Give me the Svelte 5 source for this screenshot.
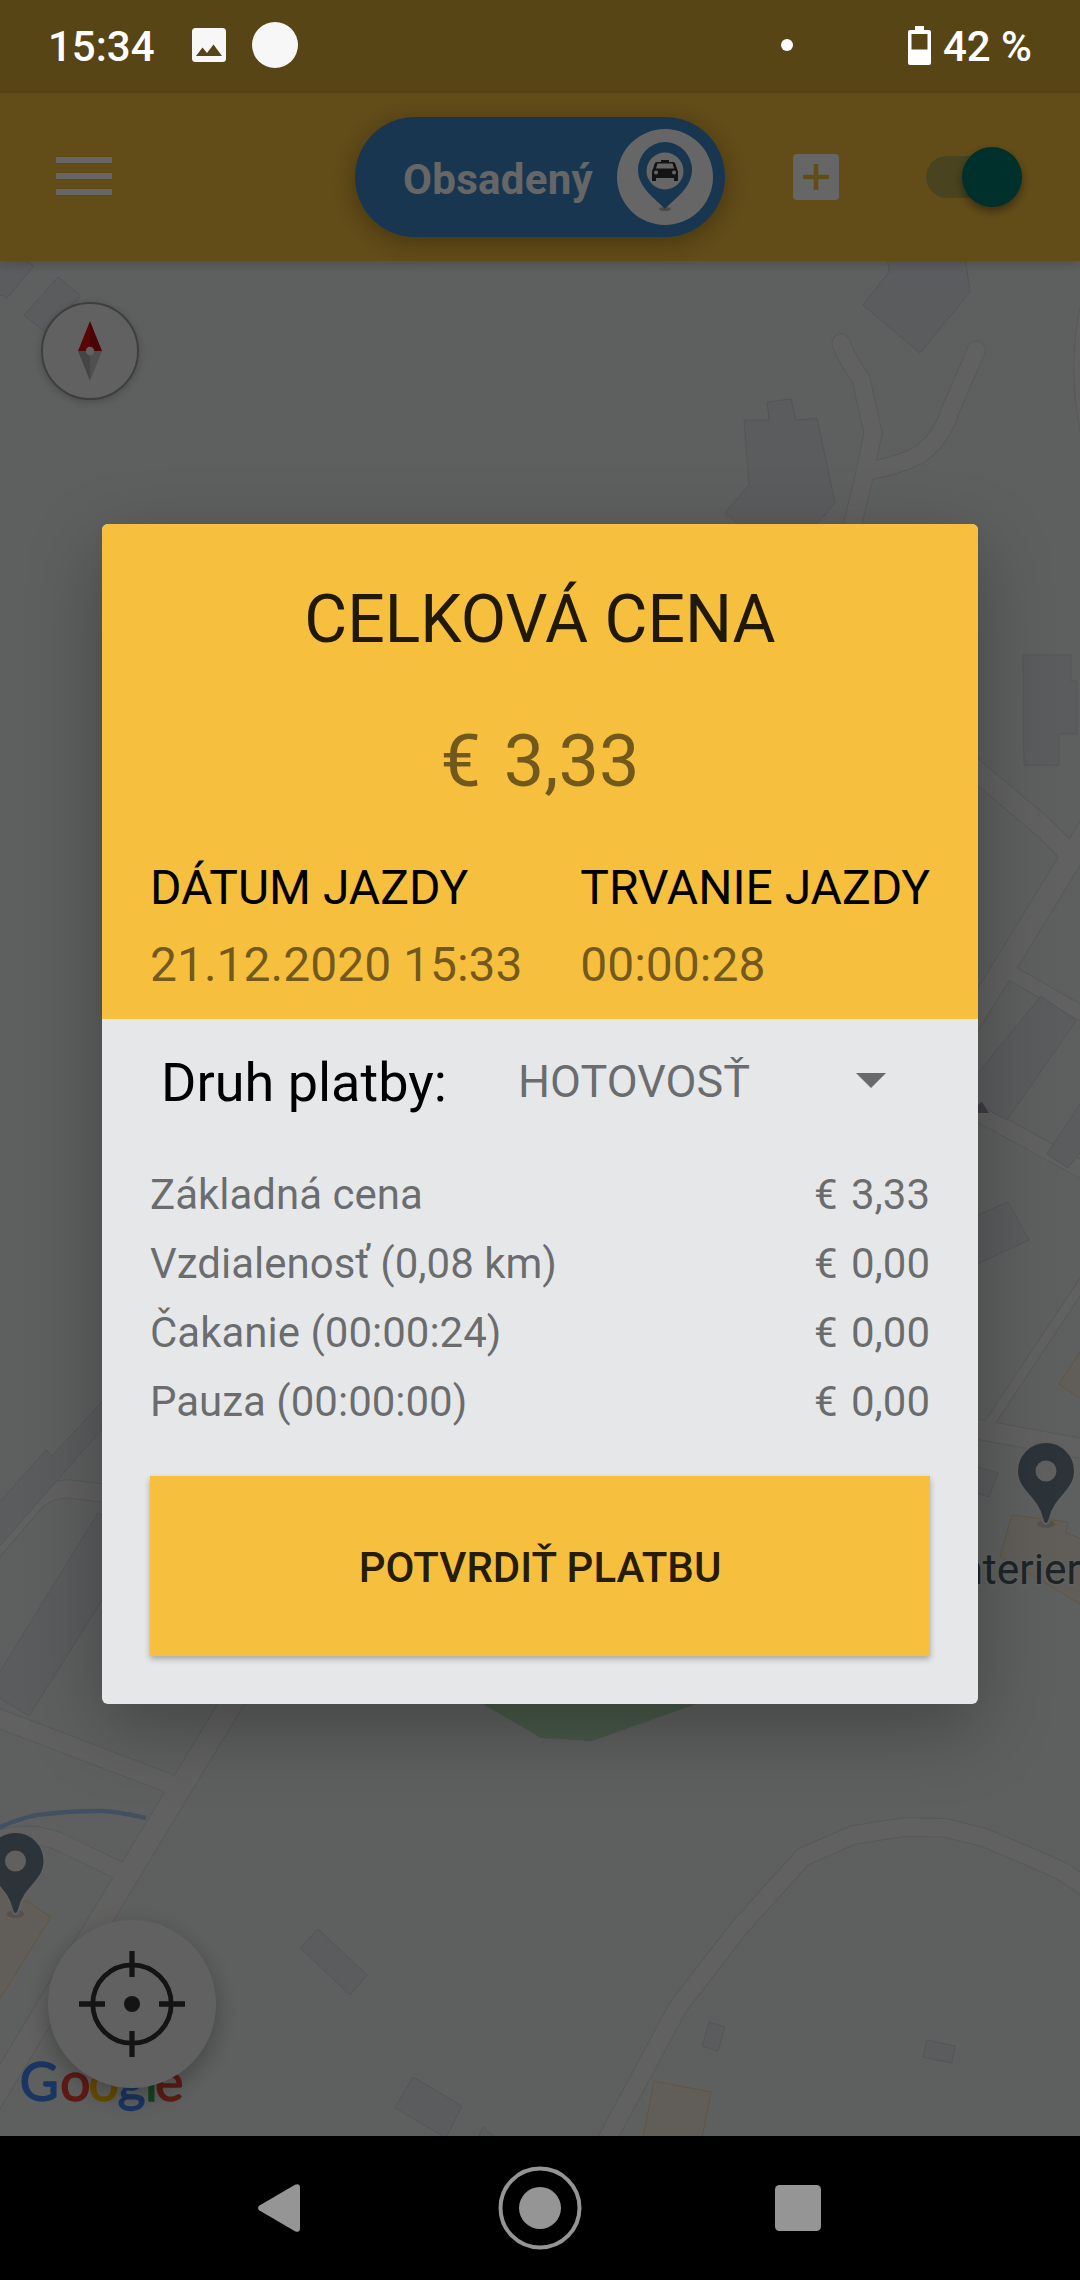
<script lang="ts">
  interface PriceRow {
    label: string;
    amount: string;
  }

  const rows: PriceRow[] = [
    { label: "Základná cena", amount: "€ 3,33" },
    { label: "Vzdialenosť (0,08 km)", amount: "€ 0,00" },
    { label: "Čakanie (00:00:24)", amount: "€ 0,00" },
    { label: "Pauza (00:00:00)", amount: "€ 0,00" },
  ];

  // Map geometry, in screen pixels. Width is the road's inner width.
  const roads = [
    { w: 17, d: "M841 343Q844 354 861 379L873 433L864 477L850 535" },
    { w: 17, d: "M976.500 350L950 411Q941 441 917 456Q897 466 868 471" },
    { w: 17, d: "M1091 300Q1075 365 1091 440" },
    { w: 20, d: "M960 757L1043 827L1066 850" },
    { w: 22, d: "M960 1038L1018 945L1090 827" },
    { w: 14, d: "M1006 970L1090 1018" },
    { w: 16, d: "M960 1103L1090 1174" },
    { w: 9, d: "M985 1430L1090 1272" },
    { w: 19, d: "M960 1426L1090 1450" },
    { w: 17, d: "M-8 1552L30 1508Q45 1488 70 1489L110 1494" },
    { w: 18, d: "M-10 1715L168 1783" },
    { w: 17, d: "M-12 1842Q30 1828 62 1843L118 1870" },
    { w: 22, d: "M243 1684L-10 2103" },
    {
      w: 17.5,
      d: "M604 2145L678 2007L739 1928L803 1857L853 1835L905 1827L946 1828L984 1837.500L1025.500 1855L1062 1871L1090 1890",
    },
  ];

  const buildings = [
    "887,255 889,272 863,305 920,353 970,292 965,255",
    "744,420 769,420 767,402 791,399 796,420 817,418 835,503 817,524 739,524 725,513 749,485",
    "-2,255 27,261 34,266 6,299 3,295 -2,296",
    "58,277 81,296 45,332 24,315",
    "1023,655 1071,655 1071,681 1077,681 1077,734 1059,734 1059,765 1024,765",
    "960,1095 1041,996 1076,1021 1007,1120 960,1095",
    "1047,1154 1082,1101 1082,1150 1068,1168",
    "960,1223 1008,1202 1029,1240 960,1272",
    "960,1462 998,1473 989,1497 960,1488",
    "-2,1504 46,1450 52,1456 110,1393 110,1420 -2,1548",
    "-2,1675 98,1513 104,1516 104,1597 29,1716 -2,1697",
    "318,1929 367,1975 350,1995 300,1948",
    "413,2077 462,2106 446,2138 395,2108",
    "483,2127 496,2138 478,2138",
    "709,2022 725,2027 718,2051 702,2046",
    "927,2040 955,2046 952,2063 923,2057",
  ];

  const shops = [
    "1059,1384 1082,1349 1082,1400",
    "1000,1556 1012,1515 1068,1522 1066,1533 1082,1539 1082,1605",
    "-2,1890 28,1902 51,1917 -2,2002",
    "654,2081 711,2092 702,2138 643,2138",
  ];

  const pins = [
    { x: 1046, y: 1471 },
    { x: 15.5, y: 1861 },
  ];

  const brand = [
    { ch: "G", x: 19.5, color: "#4285f4" },
    { ch: "o", x: 60, color: "#ea4335" },
    { ch: "o", x: 88.5, color: "#fbbc05" },
    { ch: "g", x: 117.5, color: "#4285f4" },
    { ch: "l", x: 145, color: "#34a853" },
    { ch: "e", x: 155, color: "#ea4335" },
  ];
</script>

<div class="screen">
  <header class="status">
    <span class="time">15:34</span>
    <svg class="picture" width="34" height="34" viewBox="0 0 34 34" aria-hidden="true">
      <path
        fill="#f7f7f7"
        fill-rule="evenodd"
        d="M3.500 0h27Q34 0 34 3.500v27Q34 34 30.500 34h-27Q0 34 0 30.500v-27Q0 0 3.500 0zM4 28h26l-8.500-11.500-6.500 8.500-4.500-5.500z"
      />
    </svg>
    <span class="disc"></span>
    <span class="dot"></span>
    <svg class="battery" width="23" height="39" viewBox="0 0 23 39" aria-hidden="true">
      <path
        fill="#fff"
        fill-rule="evenodd"
        d="M7 0h9v4h5q2 0 2 2v31q0 2-2 2H2q-2 0-2-2V6q0-2 2-2h5zM3.500 8v15.500h16V8z"
      />
    </svg>
    <span class="percent">42 %</span>
  </header>

  <div class="toolbar">
    <svg class="menu" width="56" height="38" viewBox="0 0 56 38" aria-hidden="true">
      <path fill="#fff" d="M0 0h56v6H0zM0 16h56v6H0zM0 32h56v6H0z" />
    </svg>
    <div class="state">
      <span class="state-label">Obsadený</span>
      <span class="state-icon">
        <svg width="56" height="70" viewBox="0 0 56 70" aria-hidden="true">
          <ellipse cx="28" cy="67" rx="6" ry="2" fill="#bbb" />
          <path fill="#3c87c8" d="M28 67C20 58 1 46 1 28a27 28 0 0 1 54 0C55 46 36 58 28 67z" />
          <circle cx="28" cy="29" r="18.500" fill="#fff" />
          <path
            fill="#333"
            fill-rule="evenodd"
            d="M24 18h8v2h4q2 0 2.500 2l1.500 5q1 1 1 3v9h-4v-3H19v3h-4v-9q0-2 1-3l1.500-5q.5-2 2.500-2h4zM20.500 21.500l-1.500 5h18l-1.500-5zM19 28.500a2 2 0 1 0 .1 0zM37 28.500a2 2 0 1 0 .1 0z"
          />
        </svg>
      </span>
    </div>
    <svg class="add" width="46" height="46" viewBox="0 0 46 46" aria-hidden="true">
      <rect width="46" height="46" rx="4" fill="#fff" />
      <path fill="#f5be3d" d="M20.700 10h4.600v10.700h10.700v4.600H25.300V36h-4.600V25.300H10v-4.600h10.700z" />
    </svg>
    <div class="switch"><span class="thumb"></span></div>
  </div>

  <main class="map">
    <svg class="tiles" width="1080" height="1875" viewBox="0 261 1080 1875">
      <polygon class="park" points="476,1700 541,1738 592,1741 705,1701" />
      {#each roads as road}
        <path class="road-edge" d={road.d} stroke-width={road.w + 2} />
      {/each}
      {#each roads as road}
        <path class="road" d={road.d} stroke-width={road.w} />
      {/each}
      {#each buildings as points}
        <polygon class="building" {points} />
      {/each}
      {#each shops as points}
        <polygon class="shop" {points} />
      {/each}
      <path class="stream" d="M-4 1829Q26 1815 46 1814Q70 1811 100 1811Q115 1811 146 1818" />
      <path fill="#9a9aa8" d="M970 1110L982 1102L989 1113L970 1113z" />
      {#each pins as pin}
        <g transform="translate({pin.x} {pin.y})">
          <ellipse cx="0" cy="53" rx="9" ry="4" fill="#000" opacity="0.12" />
          <path
            class="pin"
            d="M0 53C-3 53-3 50-4 47C-9 26-29 20-29 0A29 29 0 0 1 29 0C29 20 9 26 4 47C3 50 3 53 0 53z"
          />
          <circle r="10.500" fill="#f0f0f0" />
        </g>
      {/each}
      <text class="place" x="1081" y="1584" text-anchor="end">Interier</text>
      <text class="google" y="2101">
        {#each brand as letter}<tspan x={letter.x} fill={letter.color} stroke={letter.color}>{letter.ch}</tspan>{/each}
      </text>
    </svg>

    <div class="compass">
      <svg width="24" height="60" viewBox="0 0 24 60" aria-hidden="true">
        <path fill="#e01010" d="M12 0L0 30h12z" />
        <path fill="#b80c0c" d="M12 0l12 30H12z" />
        <path fill="#acacac" d="M0 30l12 30V30z" />
        <path fill="#c6c6c6" d="M24 30L12 60V30z" />
        <circle cx="12" cy="30" r="4.200" fill="#f5f3f3" />
      </svg>
    </div>

    <div class="locate">
      <svg width="106" height="106" viewBox="-53 -53 106 106" aria-hidden="true">
        <circle r="39.200" fill="none" stroke="#333" stroke-width="4.800" />
        <path stroke="#333" stroke-width="5.300" d="M0-53V-27M0 53V27M-53 0H-27M53 0H27" />
        <circle r="8" fill="#333" />
      </svg>
    </div>
  </main>

  <nav class="navbar">
    <svg width="42" height="48" viewBox="0 0 42 48" aria-hidden="true">
      <path fill="#959595" d="M1.500 21.500L37 .8q5-2 5 3v40.400q0 5-5 3L1.500 26.500q-3-2.500 0-5z" />
    </svg>
    <svg class="home" width="84" height="84" viewBox="0 0 84 84" aria-hidden="true">
      <circle cx="42" cy="42" r="39.500" fill="none" stroke="#959595" stroke-width="4" />
      <circle cx="42" cy="42" r="21" fill="#959595" />
    </svg>
    <svg width="46" height="46" viewBox="0 0 46 46" aria-hidden="true">
      <rect width="46" height="46" rx="4.500" fill="#959595" />
    </svg>
  </nav>

  <div class="scrim">
    <section class="dialog" role="dialog" aria-label="Celková cena">
      <div class="summary">
        <h1>CELKOVÁ CENA</h1>
        <p class="total">€ 3,33</p>
        <div class="facts">
          <div>
            <div class="fact-label">DÁTUM JAZDY</div>
            <div class="fact-value">21.12.2020 15:33</div>
          </div>
          <div>
            <div class="fact-label">TRVANIE JAZDY</div>
            <div class="fact-value">00:00:28</div>
          </div>
        </div>
      </div>
      <div class="details">
        <div class="payment">
          <span class="payment-label">Druh platby:</span>
          <span class="payment-value">HOTOVOSŤ</span>
          <span class="caret"></span>
        </div>
        <div class="rows">
          {#each rows as row}
            <div class="row">
              <span>{row.label}</span>
              <span class="amount">{row.amount}</span>
            </div>
          {/each}
        </div>
        <button type="button" class="confirm">POTVRDIŤ PLATBU</button>
      </div>
    </section>
  </div>
</div>

<style>
  :global(body) {
    margin: 0;
    background: #000;
  }
  .screen {
    position: relative;
    display: flex;
    flex-direction: column;
    width: 1080px;
    height: 2280px;
    overflow: hidden;
    font-family: Roboto, "Liberation Sans", sans-serif;
  }

  /* system status bar, above the scrim */
  .status {
    position: relative;
    z-index: 3;
    box-sizing: border-box;
    display: flex;
    align-items: center;
    height: 93px;
    padding: 0 48px 1px 48px;
    border-bottom: 2px solid #544114;
    background: #584516;
    color: #fff;
    font-size: 42px;
    font-weight: 500;
    line-height: 88px;
  }
  .time {
    width: 144px;
    padding-top: 3px;
  }
  .disc {
    width: 46px;
    height: 46px;
    margin-left: 26px;
    border-radius: 50%;
    background: #f7f7f7;
  }
  .dot {
    width: 12px;
    height: 12px;
    margin: 0 115px 0 auto;
    border-radius: 50%;
    background: #fff;
  }
  .percent {
    margin-left: 12px;
    padding-top: 3px;
  }

  .toolbar {
    position: relative;
    z-index: 1;
    box-sizing: border-box;
    display: flex;
    align-items: center;
    height: 168px;
    padding: 0 58px 0 56px;
    background: #f5be3d;
    box-shadow: 0 3px 10px rgba(0, 0, 0, 0.18);
  }
  .menu {
    margin-bottom: 2px;
  }
  .state {
    box-sizing: border-box;
    display: flex;
    align-items: center;
    justify-content: space-between;
    width: 370px;
    height: 120px;
    margin-left: 243px;
    padding: 0 12px 0 48px;
    border-radius: 60px;
    background: #3c87c8;
    box-shadow: 0 5px 24px rgba(0, 0, 0, 0.3);
  }
  .state-label {
    padding-top: 5px;
    color: #fff;
    font-size: 42px;
    font-weight: 700;
    letter-spacing: 0.3px;
  }
  .state-icon {
    display: flex;
    align-items: center;
    justify-content: center;
    width: 96px;
    height: 96px;
    border-radius: 50%;
    background: #fff;
  }
  .add {
    margin-left: 68px;
  }
  .switch {
    display: flex;
    align-items: center;
    justify-content: flex-end;
    width: 96px;
    height: 42px;
    margin-left: auto;
    border-radius: 21px;
    background: #b7a94f;
  }
  .thumb {
    width: 60px;
    height: 60px;
    border-radius: 50%;
    background: #00796b;
    box-shadow: 0 4px 8px rgba(0, 0, 0, 0.4);
  }

  .map {
    position: relative;
    height: 1875px;
    background: #ebf0ed;
  }
  .tiles {
    display: block;
  }
  .park {
    fill: #b4dfba;
  }
  .road-edge,
  .road,
  .stream {
    fill: none;
    stroke-linecap: round;
    stroke-linejoin: round;
  }
  .road-edge {
    stroke: #d8dbda;
  }
  .road {
    stroke: #f5f3f2;
  }
  .stream {
    stroke: #a2caf2;
    stroke-width: 4.5;
    stroke-linecap: butt;
  }
  .building {
    fill: #e4e6ec;
    stroke: #d1d3d9;
  }
  .shop {
    fill: #f3e8db;
    stroke: #f0d49c;
  }
  .pin {
    fill: #70838e;
    stroke: #f0f0f0;
    stroke-width: 2;
  }
  .place {
    fill: #4c5d65;
    stroke: #f5f5f5;
    stroke-width: 3;
    paint-order: stroke;
    font-size: 42.5px;
    font-weight: 400;
  }
  .google {
    font-family: Lato, sans-serif;
    font-size: 54px;
    font-weight: 400;
    stroke-width: 1.3;
  }
  .compass,
  .locate {
    position: absolute;
    box-sizing: border-box;
    display: flex;
    align-items: center;
    justify-content: center;
    border-radius: 50%;
    background: #f5f3f3;
  }
  .compass {
    top: 41px;
    left: 41px;
    width: 98px;
    height: 98px;
    border: 2px solid #9c9c9c;
    box-shadow: 0 2px 8px rgba(0, 0, 0, 0.22);
  }
  .locate {
    bottom: 48px;
    left: 48px;
    width: 168px;
    height: 168px;
    box-shadow: 0 8px 24px rgba(0, 0, 0, 0.28);
  }

  .navbar {
    position: relative;
    z-index: 3;
    display: flex;
    align-items: center;
    justify-content: space-between;
    box-sizing: border-box;
    height: 144px;
    padding: 0 259px 0 258px;
    background: #000;
  }
  .home {
    margin-left: 5px;
  }

  .scrim {
    position: absolute;
    inset: 93px 0 144px;
    z-index: 2;
    display: grid;
    place-items: center;
    padding-bottom: 1px;
    background: rgba(0, 0, 0, 0.6);
  }
  .dialog {
    width: 876px;
    overflow: hidden;
    border-radius: 6px;
    background: #e5e7e9;
    box-shadow: 0 24px 76px rgba(0, 0, 0, 0.28);
  }
  .summary {
    padding: 56px 48px 16px;
    background: #f6bf3e;
  }
  h1 {
    margin: 0 0 56px;
    color: rgba(0, 0, 0, 0.87);
    font-size: 66px;
    font-weight: 400;
    line-height: 80px;
    text-align: center;
  }
  .total {
    margin: 0 0 43px;
    color: rgba(0, 0, 0, 0.54);
    font-size: 72px;
    line-height: 91px;
    height: 90px;
    text-align: center;
    word-spacing: 5px;
  }
  .facts {
    display: flex;
    justify-content: space-between;
    font-size: 48px;
    line-height: 77px;
    white-space: nowrap;
  }
  .fact-value {
    color: rgba(0, 0, 0, 0.54);
  }
  .details {
    padding: 0 48px 48px;
    color: rgba(0, 0, 0, 0.54);
  }
  .payment {
    display: flex;
    align-items: center;
    height: 126px;
    padding: 0 44px 0 11px;
    font-size: 45px;
  }
  .payment-label {
    width: 357px;
    color: #000;
    font-size: 54px;
  }
  .payment-value {
    padding-bottom: 2px;
  }
  .caret {
    margin: 0 0 3px auto;
    border: solid transparent;
    border-width: 15px 15px 0;
    border-top-color: #6a6a6b;
  }
  .rows {
    padding: 15px 0 40px;
    font-size: 42px;
    line-height: 69px;
  }
  .row {
    display: flex;
    justify-content: space-between;
  }
  .amount {
    word-spacing: 3px;
  }
  .confirm {
    display: block;
    width: 100%;
    height: 180px;
    padding: 3px 0 0;
    border: 0;
    background: #f6bf3e;
    box-shadow: 0 3px 6px rgba(0, 0, 0, 0.28);
    color: rgba(0, 0, 0, 0.87);
    font: 500 42px Roboto, "Liberation Sans", sans-serif;
  }
</style>
